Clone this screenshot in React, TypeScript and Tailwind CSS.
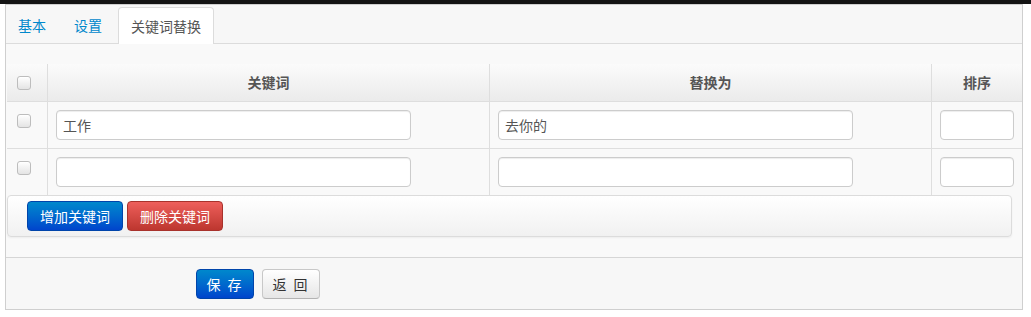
import React from 'react'

const font = { fontFamily: '"Noto Sans CJK SC", "Liberation Sans", sans-serif' }

function Checkbox() {
  return (
    <span className="block w-[14px] h-[14px] rounded-[3px] border border-[#bdbdbd] bg-gradient-to-b from-white to-[#e4e4e4] shadow-[inset_0_1px_0_#fff]" />
  )
}

function TextInput({ value = '', w }: { value?: string; w: string }) {
  return (
    <input
      defaultValue={value}
      className={`${w} h-[30px] rounded-[4px] border border-[#ccc] bg-white px-[6px] text-[14px] text-[#555] outline-none shadow-[inset_0_1px_1px_rgba(0,0,0,0.075)]`}
      style={font}
    />
  )
}

const rows = [
  { k: '工作', v: '去你的' },
  { k: '', v: '' },
]

export default function App() {
  return (
    <div className="w-[1031px] h-[317px] bg-white overflow-hidden" style={font}>
      <div className="h-1 bg-[#141414]" />

      <div className="ml-[5px] w-[1018px] border border-[#cfcfcf] bg-[#f9f9f9]">
        {/* Tabs */}
        <div className="h-[39px] flex items-end gap-[4px] border-b border-[#dcdcdc] bg-[#f7f7f7]">
          <div className="-mb-px h-[37px] px-3 flex items-center text-[14px] text-[#0088cc]">基本</div>
          <div className="-mb-px h-[37px] px-3 flex items-center text-[14px] text-[#0088cc]">设置</div>
          <div className="-mb-px h-[37px] px-3 flex items-center text-[14px] text-[#555] bg-white border border-b-0 border-[#dcdcdc] rounded-t-[4px]">
            关键词替换
          </div>
        </div>

        {/* Table */}
        <div className="mt-5 ml-px">
          <div className="grid grid-cols-[41px_442px_442px_1fr] border-b border-[#dedede] bg-gradient-to-b from-[#fbfbfb] to-[#ebebeb] h-[38px]">
            <div className="flex items-center pl-[10px] border-r border-[#dedede]">
              <Checkbox />
            </div>
            <div className="flex items-center justify-center border-r border-[#dedede] text-[14px] font-bold text-[#555]">关键词</div>
            <div className="flex items-center justify-center border-r border-[#dedede] text-[14px] font-bold text-[#555]">替换为</div>
            <div className="flex items-center justify-center text-[14px] font-bold text-[#555]">排序</div>
          </div>

          {rows.map((r, i) => (
            <div
              key={i}
              className={`grid grid-cols-[41px_442px_442px_1fr] ${i < rows.length - 1 ? 'border-b border-[#dedede]' : ''}`}
            >
              <div className="pl-[10px] pt-3 border-r border-[#dedede]">
                <Checkbox />
              </div>
              <div className="py-2 pl-2 border-r border-[#dedede]">
                <TextInput value={r.k} w="w-[355px]" />
              </div>
              <div className="py-2 pl-2 border-r border-[#dedede]">
                <TextInput value={r.v} w="w-[355px]" />
              </div>
              <div className="py-2 pl-2">
                <TextInput w="w-[74px]" />
              </div>
            </div>
          ))}
        </div>

        {/* Button bar */}
        <div className="ml-px w-[1005px] h-[42px] rounded-[4px] border border-[#dcdcdc] bg-gradient-to-b from-white to-[#f1f1f1] pl-[19px] pt-[5px] flex gap-1 items-start shadow-[0_1px_2px_rgba(0,0,0,0.05)]">
          <button className="h-[30px] px-3 rounded-[4px] border border-[#0044aa] bg-gradient-to-b from-[#0088cc] to-[#0044cc] text-white text-[14px]">
            增加关键词
          </button>
          <button className="h-[30px] px-3 rounded-[4px] border border-[#a8322c] bg-gradient-to-b from-[#ee5f5b] to-[#bd362f] text-white text-[14px]">
            删除关键词
          </button>
        </div>

        {/* Form actions */}
        <div className="mt-5 border-t border-[#d6d6d6] bg-[#f7f7f7] h-[52px] pl-[190px] pt-[11px] flex gap-2 items-start">
          <button className="h-[30px] w-[58px] rounded-[4px] border border-[#0044aa] bg-gradient-to-b from-[#0088cc] to-[#0044cc] text-white text-[14px] tracking-[2px]">
            保 存
          </button>
          <button className="h-[30px] w-[58px] rounded-[4px] border border-[#c8c8c8] border-b-[#b3b3b3] bg-gradient-to-b from-white to-[#e6e6e6] text-[#333] text-[14px] tracking-[2px]">
            返 回
          </button>
        </div>
      </div>
    </div>
  )
}
